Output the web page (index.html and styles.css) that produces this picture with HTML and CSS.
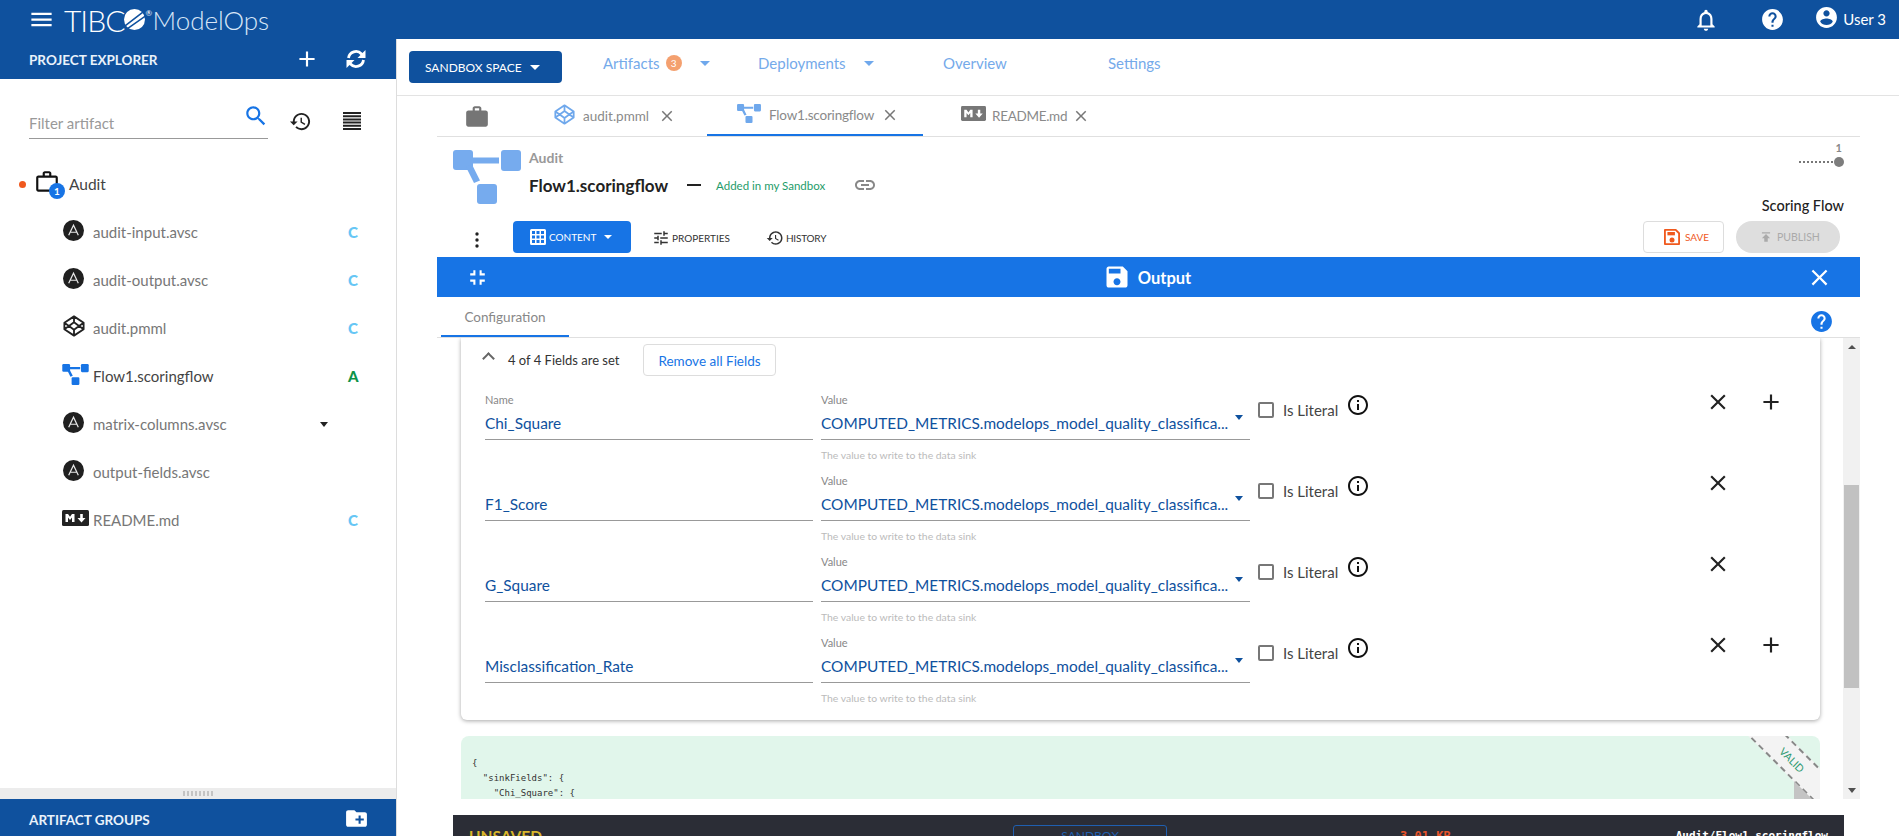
FILE: index.html
```html
<!DOCTYPE html>
<html lang="en">
<head>
<meta charset="utf-8">
<title>TIBCO ModelOps</title>
<link rel="stylesheet" href="styles.css">
</head>
<body>
<svg class="defs" aria-hidden="true">
<defs>
<symbol id="i-menu" viewBox="0 0 24 24"><path d="M3 18h18v-2H3v2zm0-5h18v-2H3v2zm0-7v2h18V6H3z"/></symbol>
<symbol id="i-add" viewBox="0 0 24 24"><path d="M19 13h-6v6h-2v-6H5v-2h6V5h2v6h6v2z"/></symbol>
<symbol id="i-close" viewBox="0 0 24 24"><path d="M19 6.41L17.59 5 12 10.59 6.41 5 5 6.41 10.59 12 5 17.59 6.41 19 12 13.41 17.59 19 19 17.59 13.41 12z"/></symbol>
<symbol id="i-search" viewBox="0 0 24 24"><path d="M15.5 14h-.79l-.28-.27C15.41 12.59 16 11.11 16 9.5 16 5.91 13.09 3 9.5 3S3 5.91 3 9.5 5.91 16 9.5 16c1.61 0 3.09-.59 4.23-1.57l.27.28v.79l5 4.99L20.49 19l-4.99-5zm-6 0C7.01 14 5 11.99 5 9.5S7.01 5 9.5 5 14 7.01 14 9.5 11.99 14 9.5 14z"/></symbol>
<symbol id="i-history" viewBox="0 0 24 24"><path d="M13 3c-4.97 0-9 4.03-9 9H1l3.89 3.89.07.14L9 12H6c0-3.87 3.13-7 7-7s7 3.13 7 7-3.13 7-7 7c-1.93 0-3.68-.79-4.94-2.06l-1.42 1.42C8.27 19.99 10.51 21 13 21c4.97 0 9-4.03 9-9s-4.03-9-9-9zm-1 5v5l4.28 2.54.72-1.21-3.5-2.08V8H12z"/></symbol>
<symbol id="i-bell" viewBox="0 0 24 24"><path d="M12 22c1.1 0 2-.9 2-2h-4c0 1.1.9 2 2 2zm6-6v-5c0-3.07-1.63-5.64-4.5-6.32V4c0-.83-.67-1.5-1.5-1.5s-1.5.67-1.5 1.5v.68C7.64 5.36 6 7.92 6 11v5l-2 2v1h16v-1l-2-2zm-2 1H8v-6c0-2.48 1.51-4.5 4-4.5s4 2.02 4 4.5v6z"/></symbol>
<symbol id="i-help" viewBox="0 0 24 24"><path d="M12 2C6.48 2 2 6.48 2 12s4.48 10 10 10 10-4.48 10-10S17.52 2 12 2zm1 17h-2v-2h2v2zm2.07-7.75l-.9.92C13.45 12.9 13 13.5 13 15h-2v-.5c0-1.1.45-2.1 1.17-2.83l1.24-1.26c.37-.36.59-.86.59-1.41 0-1.1-.9-2-2-2s-2 .9-2 2H8c0-2.21 1.79-4 4-4s4 1.79 4 4c0 .88-.36 1.68-.93 2.25z"/></symbol>
<symbol id="i-user" viewBox="0 0 24 24"><path d="M12 2C6.48 2 2 6.48 2 12s4.48 10 10 10 10-4.48 10-10S17.52 2 12 2zm0 3c1.66 0 3 1.34 3 3s-1.34 3-3 3-3-1.34-3-3 1.34-3 3-3zm0 14.2c-2.5 0-4.71-1.28-6-3.22.03-1.99 4-3.08 6-3.08 1.99 0 5.97 1.09 6 3.08-1.29 1.94-3.5 3.22-6 3.22z"/></symbol>
<symbol id="i-info" viewBox="0 0 24 24"><path d="M11 7h2v2h-2zm0 4h2v6h-2zm1-9C6.48 2 2 6.48 2 12s4.48 10 10 10 10-4.48 10-10S17.52 2 12 2zm0 18c-4.41 0-8-3.59-8-8s3.59-8 8-8 8 3.59 8 8-3.59 8-8 8z"/></symbol>
<symbol id="i-save" viewBox="0 0 24 24"><path d="M17 3H5c-1.11 0-2 .9-2 2v14c0 1.1.89 2 2 2h14c1.1 0 2-.9 2-2V7l-4-4zm-5 16c-1.66 0-3-1.34-3-3s1.34-3 3-3 3 1.34 3 3-1.34 3-3 3zm3-10H5V5h10v4z"/></symbol>
<symbol id="i-save-o" viewBox="0 0 24 24"><path d="M3.500 3.500h13l4 4v13h-17z" fill="none" stroke="currentColor" stroke-width="2.200" stroke-linejoin="round"/><path d="M6.500 6h9v4h-9z"/><circle cx="12" cy="15.500" r="3"/></symbol>
<symbol id="i-tune" viewBox="0 0 24 24"><path d="M3 17v2h6v-2H3zM3 5v2h10V5H3zm10 16v-2h8v-2h-8v-2h-2v6h2zM7 9v2H3v2h4v2h2V9H7zm14 4v-2H11v2h10zm-6-4h2V7h4V5h-4V3h-2v6z"/></symbol>
<symbol id="i-link" viewBox="0 0 24 24"><path d="M3.9 12c0-1.71 1.39-3.1 3.1-3.1h4V7H7c-2.76 0-5 2.24-5 5s2.24 5 5 5h4v-1.9H7c-1.71 0-3.1-1.39-3.1-3.1zM8 13h8v-2H8v2zm9-6h-4v1.9h4c1.71 0 3.1 1.39 3.1 3.1s-1.39 3.1-3.1 3.1h-4V17h4c2.76 0 5-2.24 5-5s-2.24-5-5-5z"/></symbol>
<symbol id="i-compress" viewBox="0 0 24 24"><path d="M5 16h3v3h2v-5H5v2zm3-8H5v2h5V5H8v3zm6 11h2v-3h3v-2h-5v5zm2-11V5h-2v5h5V8h-3z"/></symbol>
<symbol id="i-bag" viewBox="0 0 24 24"><path d="M20 6h-4V4c0-1.11-.89-2-2-2h-4c-1.11 0-2 .89-2 2v2H4c-1.11 0-1.99.89-1.99 2L2 19c0 1.11.89 2 2 2h16c1.11 0 2-.89 2-2V8c0-1.11-.89-2-2-2zm-6 0h-4V4h4v2z"/></symbol>
<symbol id="i-bag-o" viewBox="0 0 24 24"><path d="M14 6V4h-4v2h4zM4 8v11h16V8H4zm16-2c1.11 0 2 .89 2 2v11c0 1.11-.89 2-2 2H4c-1.11 0-2-.89-2-2l.01-11c0-1.11.88-2 1.99-2h4V4c0-1.11.89-2 2-2h4c1.11 0 2 .89 2 2v2h4z"/></symbol>
<symbol id="i-publish" viewBox="0 0 24 24"><path d="M5 4v2h14V4H5zm0 10h4v6h6v-6h4l-7-7-7 7z"/></symbol>
<symbol id="i-folder" viewBox="0 0 24 24"><path d="M20 6h-8l-2-2H4c-1.1 0-2 .9-2 2v12c0 1.1.9 2 2 2h16c1.1 0 2-.9 2-2V8c0-1.1-.9-2-2-2zm-1 8h-3v3h-2v-3h-3v-2h3V9h2v3h3v2z"/></symbol>
<symbol id="i-sync" viewBox="0 0 24 24"><path d="M4.500 11a7.500 7.500 0 0 1 13-4l2 2.200M19.500 13a7.500 7.500 0 0 1-13 4l-2-2.200" fill="none" stroke="currentColor" stroke-width="2.800"/><path d="M21.500 3v8h-8zM2.500 21v-8h8z"/></symbol>
<symbol id="i-lines" viewBox="0 0 18 18"><path d="M0 0h18v2H0zM0 3.200h18v2H0zM0 6.400h18v2H0zM0 9.600h18v2H0zM0 12.800h18v2H0zM0 16h18v2H0z"/></symbol>
<symbol id="i-dots" viewBox="0 0 6 18"><circle cx="3" cy="3" r="1.700"/><circle cx="3" cy="9" r="1.700"/><circle cx="3" cy="15" r="1.700"/></symbol>
<symbol id="i-grid" viewBox="0 0 16 16"><path d="M1.500 0h13A1.500 1.500 0 0 1 16 1.500v13a1.500 1.500 0 0 1-1.500 1.500h-13A1.500 1.500 0 0 1 0 14.500v-13A1.500 1.500 0 0 1 1.500 0zM2 2v3h3V2zm4.500 0v3h3V2zM11 2v3h3V2zM2 6.500v3h3v-3zm4.500 0v3h3v-3zm4.500 0v3h3v-3zM2 11v3h3v-3zm4.500 0v3h3v-3zm4.500 0v3h3v-3z" fill-rule="evenodd"/></symbol>
<symbol id="i-flow" viewBox="0 0 68 54"><rect x="0" y="0" width="20" height="20" rx="3"/><rect x="48" y="0" width="20" height="21" rx="3"/><rect x="24" y="34" width="20" height="20" rx="3"/><path d="M18 7.500h28v6H18zM13 17l6-2.500 8 16-6 2.500z"/></symbol>
<symbol id="i-cube" viewBox="0 0 24 24"><path d="M12 1.500 22.500 8.500v7L12 22.500 1.500 15.500v-7zM12 8 6.500 12 12 16l5.500-4zM12 1.500V8M12 16v6.500M1.500 8.500 6.500 12 1.500 15.500M22.500 8.500 17.500 12l5 3.500" fill="none" stroke="currentColor" stroke-width="2" stroke-linejoin="round"/></symbol>
<symbol id="i-ansible" viewBox="0 0 24 24"><circle cx="12" cy="12" r="12" fill="#202020"/><path d="M6.500 17.500 12 6l5.500 11.500M8 14h8" fill="none" stroke="#e8e8e8" stroke-width="1.400"/></symbol>
<symbol id="i-md" viewBox="0 0 27 16"><rect width="27" height="16" rx="1.500" fill="currentColor"/><path d="M3.500 12V4h2.500l2 2.800L10 4h2.500v8H10V7.500L8 10 6 7.500V12zM18.200 4h2.600v4h2.700l-4 4.500-4-4.500h2.700z" fill="#fff"/></symbol>
</defs>
</svg>

<header class="topbar">
  <svg class="ic menu-ic"><use href="#i-menu"/></svg>
  <div class="logo">
    <span class="logo-tibco">TIBC</span>
    <svg class="logo-ball" viewBox="0 0 20 20"><circle cx="10" cy="10" r="10" fill="#fff"/><path d="M1 16 18 3M3 19 20 7" stroke="#0f519e" stroke-width="1.500"/></svg>
    <span class="logo-reg">®</span>
    <span class="logo-name">ModelOps</span>
  </div>
  <div class="top-actions">
    <svg class="ic bell-ic"><use href="#i-bell"/></svg>
    <svg class="ic help-ic"><use href="#i-help"/></svg>
    <svg class="ic user-ic"><use href="#i-user"/></svg>
    <span class="user-name">User 3</span>
  </div>
</header>

<div class="main">
  <aside class="explorer">
    <div class="pe-head">
      <span class="pe-title">PROJECT EXPLORER</span>
      <svg class="ic pe-add"><use href="#i-add"/></svg>
      <svg class="ic pe-sync"><use href="#i-sync"/></svg>
    </div>
    <div class="filter-row">
      <div class="filter">
        <span class="filter-text">Filter artifact</span>
        <svg class="ic filter-search"><use href="#i-search"/></svg>
      </div>
      <svg class="ic filter-history"><use href="#i-history"/></svg>
      <svg class="ic filter-lines"><use href="#i-lines"/></svg>
    </div>
    <div class="tree">
      <div class="tree-root">
        <span class="root-dot"></span>
        <span class="root-icon"><svg class="ic root-bag"><use href="#i-bag-o"/></svg><span class="root-badge">1</span></span>
        <span class="root-name">Audit</span>
      </div>
      <div class="tree-row"><span class="tree-icon"><svg class="ic ansible"><use href="#i-ansible"/></svg></span><span class="tree-name">audit-input.avsc</span><span class="status status-c">C</span></div>
      <div class="tree-row"><span class="tree-icon"><svg class="ic ansible"><use href="#i-ansible"/></svg></span><span class="tree-name">audit-output.avsc</span><span class="status status-c">C</span></div>
      <div class="tree-row"><span class="tree-icon"><svg class="ic cube-dark"><use href="#i-cube"/></svg></span><span class="tree-name">audit.pmml</span><span class="status status-c">C</span></div>
      <div class="tree-row"><span class="tree-icon"><svg class="ic flow-small"><use href="#i-flow"/></svg></span><span class="tree-name tree-name-active">Flow1.scoringflow</span><span class="status status-a">A</span></div>
      <div class="tree-row"><span class="tree-icon"><svg class="ic ansible"><use href="#i-ansible"/></svg></span><span class="tree-name">matrix-columns.avsc</span><span class="tree-caret"></span></div>
      <div class="tree-row"><span class="tree-icon"><svg class="ic ansible"><use href="#i-ansible"/></svg></span><span class="tree-name">output-fields.avsc</span></div>
      <div class="tree-row"><span class="tree-icon"><svg class="ic md-dark"><use href="#i-md"/></svg></span><span class="tree-name">README.md</span><span class="status status-c">C</span></div>
    </div>
    <div class="splitter"><span class="splitter-grip"></span></div>
    <div class="groups">
      <span class="pe-title">ARTIFACT GROUPS</span>
      <svg class="ic groups-folder"><use href="#i-folder"/></svg>
    </div>
  </aside>

  <section class="workspace">
    <nav class="nav">
      <button class="space-btn">SANDBOX SPACE <span class="caret caret-white"></span></button>
      <div class="nav-links">
        <span class="nav-link nav-artifacts">Artifacts <span class="nav-badge">3</span><span class="caret caret-blue"></span></span>
        <span class="nav-link nav-deploy">Deployments <span class="caret caret-blue"></span></span>
        <span class="nav-link nav-overview">Overview</span>
        <span class="nav-link nav-settings">Settings</span>
      </div>
    </nav>
    <div class="doc">
      <div class="tabs">
        <div class="tab tab-bag"><svg class="ic tab-bag-ic"><use href="#i-bag"/></svg></div>
        <div class="tab tab-pmml"><svg class="ic tab-cube"><use href="#i-cube"/></svg><span class="tab-name">audit.pmml</span><svg class="ic tab-x"><use href="#i-close"/></svg></div>
        <div class="tab tab-flow"><svg class="ic tab-flow-ic"><use href="#i-flow"/></svg><span class="tab-name">Flow1.scoringflow</span><svg class="ic tab-x"><use href="#i-close"/></svg></div>
        <div class="tab tab-md"><svg class="ic tab-md-ic"><use href="#i-md"/></svg><span class="tab-name">README.md</span><svg class="ic tab-x"><use href="#i-close"/></svg></div>
      </div>
      <div class="head">
        <svg class="ic head-flow"><use href="#i-flow"/></svg>
        <div class="head-titles">
          <div class="head-project">Audit</div>
          <div class="head-main">
            <span class="head-file">Flow1.scoringflow</span>
            <span class="head-dash"></span>
            <span class="head-added">Added in my Sandbox</span>
            <svg class="ic head-link"><use href="#i-link"/></svg>
          </div>
        </div>
        <div class="head-right">
          <div class="version-num">1</div>
          <div class="version-line"><span class="version-dots"></span><span class="version-dot"></span></div>
          <div class="head-type">Scoring Flow</div>
        </div>
      </div>
      <div class="toolbar">
        <svg class="ic tool-dots"><use href="#i-dots"/></svg>
        <button class="tool-content"><svg class="ic grid-ic"><use href="#i-grid"/></svg>CONTENT<span class="caret caret-white caret-sm"></span></button>
        <span class="tool-link tool-props"><svg class="ic tool-ic"><use href="#i-tune"/></svg>PROPERTIES</span>
        <span class="tool-link tool-hist"><svg class="ic tool-ic"><use href="#i-history"/></svg>HISTORY</span>
        <button class="tool-save"><svg class="ic save-ic"><use href="#i-save-o"/></svg>SAVE</button>
        <button class="tool-publish"><svg class="ic publish-ic"><use href="#i-publish"/></svg>PUBLISH</button>
      </div>
      <div class="bluebar">
        <svg class="ic bar-compress"><use href="#i-compress"/></svg>
        <div class="bar-title"><svg class="ic bar-save"><use href="#i-save"/></svg>Output</div>
        <svg class="ic bar-close"><use href="#i-close"/></svg>
      </div>
      <div class="subtabs">
        <span class="subtab">Configuration</span>
        <svg class="ic sub-help"><use href="#i-help"/></svg>
      </div>
      <div class="scroll">
        <div class="scroll-content">
          <div class="card">
            <div class="card-top">
              <span class="chevron"></span>
              <span class="fields-count">4 of 4 Fields are set</span>
              <button class="remove-btn">Remove all Fields</button>
            </div>
            <div class="field">
              <div class="cell-name"><div class="label">Name</div><div class="input">Chi_Square</div></div>
              <div class="cell-value"><div class="label">Value</div><div class="input input-select">COMPUTED_METRICS.modelops_model_quality_classifica...<span class="select-caret"></span></div><div class="helper">The value to write to the data sink</div></div>
              <label class="literal"><span class="checkbox"></span>Is Literal</label>
              <svg class="ic info-ic"><use href="#i-info"/></svg>
              <svg class="ic row-x"><use href="#i-close"/></svg>
              <svg class="ic row-plus"><use href="#i-add"/></svg>
            </div>
            <div class="field">
              <div class="cell-name"><div class="label"></div><div class="input">F1_Score</div></div>
              <div class="cell-value"><div class="label">Value</div><div class="input input-select">COMPUTED_METRICS.modelops_model_quality_classifica...<span class="select-caret"></span></div><div class="helper">The value to write to the data sink</div></div>
              <label class="literal"><span class="checkbox"></span>Is Literal</label>
              <svg class="ic info-ic"><use href="#i-info"/></svg>
              <svg class="ic row-x"><use href="#i-close"/></svg>
            </div>
            <div class="field">
              <div class="cell-name"><div class="label"></div><div class="input">G_Square</div></div>
              <div class="cell-value"><div class="label">Value</div><div class="input input-select">COMPUTED_METRICS.modelops_model_quality_classifica...<span class="select-caret"></span></div><div class="helper">The value to write to the data sink</div></div>
              <label class="literal"><span class="checkbox"></span>Is Literal</label>
              <svg class="ic info-ic"><use href="#i-info"/></svg>
              <svg class="ic row-x"><use href="#i-close"/></svg>
            </div>
            <div class="field">
              <div class="cell-name"><div class="label"></div><div class="input">Misclassification_Rate</div></div>
              <div class="cell-value"><div class="label">Value</div><div class="input input-select">COMPUTED_METRICS.modelops_model_quality_classifica...<span class="select-caret"></span></div><div class="helper">The value to write to the data sink</div></div>
              <label class="literal"><span class="checkbox"></span>Is Literal</label>
              <svg class="ic info-ic"><use href="#i-info"/></svg>
              <svg class="ic row-x"><use href="#i-close"/></svg>
              <svg class="ic row-plus"><use href="#i-add"/></svg>
            </div>
          </div>
          <div class="json">
<pre class="json-code">{
  "sinkFields": {
    "Chi_Square": {</pre>
            <div class="ribbon"><span class="ribbon-text">VALID</span></div>
            <span class="ribbon-fold"></span>
          </div>
        </div>
        <div class="scrollbar">
          <span class="sb-up"></span>
          <span class="sb-track"><span class="sb-thumb"></span></span>
          <span class="sb-down"></span>
        </div>
      </div>
      <footer class="statusbar">
        <span class="sb-unsaved">UNSAVED</span>
        <span class="sb-sandbox">SANDBOX</span>
        <span class="sb-size">3.01 KB</span>
        <span class="sb-path">Audit/Flow1.scoringflow</span>
      </footer>
    </div>
  </section>
</div>
</body>
</html>
```
FILE: styles.css
```css
* { box-sizing: border-box; }
html, body { margin: 0; height: 836px; overflow: hidden; }
body {
  display: flex;
  flex-direction: column;
  font-family: "Lato", "Noto Sans", sans-serif;
  color: #333;
  background: #fff;
}
button { font-family: inherit; cursor: pointer; }
.defs { width: 0; height: 0; position: absolute; }
.ic { display: block; flex: none; fill: currentColor; }

/* top bar */
.topbar {
  flex: none; height: 39px; background: #0f519e; color: #fff;
  display: flex; align-items: center; padding-left: 28px;
}
.menu-ic { width: 27px; height: 27px; }
.logo { display: flex; align-items: center; margin-left: 9px; height: 39px; }
.logo-tibco { font-size: 30px; font-weight: 300; letter-spacing: -1px; }
.logo-ball { width: 21px; height: 21px; margin-left: 0; }
.logo-reg { font-size: 8px; margin: -14px 0 0 0; width: 7px; }
.logo-name { font-size: 26px; font-weight: 300; color: #d7e6f7; }
.top-actions { margin-left: auto; display: flex; align-items: center; padding-right: 13px; }
.bell-ic { width: 26px; height: 26px; margin-right: 1px; }
.help-ic { width: 25px; height: 25px; margin-left: 40px; }
.user-ic { width: 25px; height: 25px; margin: -4px 0 0 29px; }
.user-name { font-size: 15px; margin: -2px 0 0 4px; }

.main { flex: 1; display: flex; min-height: 0; }

/* explorer */
.explorer { flex: none; width: 397px; border-right: 1px solid #ddd; display: flex; flex-direction: column; }
.pe-head {
  flex: none; height: 40px; background: #0f519e; color: #fff;
  display: flex; align-items: center; padding-left: 29px;
}
.pe-title { font-size: 13.5px; font-weight: 700; color: #eaf2fb; }
.pe-head .pe-title { margin-top: 2px; width: 133px; white-space: nowrap; }
.pe-add { width: 26px; height: 26px; margin-left: 132px; }
.pe-sync { width: 24px; height: 24px; margin-left: 24px; }
.filter-row { flex: none; display: flex; padding: 19px 0 0 29px; height: 80px; }
.filter {
  width: 239px; height: 41px; border-bottom: 1px solid #999;
  display: flex; justify-content: space-between; padding-top: 12px;
}
.filter-text { font-size: 15px; color: #999; line-height: 24px; padding-top: 1px; }
.filter-search { width: 26px; height: 26px; color: #1774e5; margin: -7px -1px 0 0; }
.filter-history { width: 23px; height: 23px; margin: 12px 0 0 21px; color: #222; }
.filter-lines { width: 18px; height: 18px; margin: 14px 0 0 31px; color: #222; }
.tree { flex: 1; display: flex; flex-direction: column; padding-top: 5px; }
.tree-root { display: flex; align-items: center; height: 40px; padding-left: 19px; margin-bottom: 4px; }
.root-dot { width: 7px; height: 7px; border-radius: 50%; background: #f0591e; }
.root-icon { position: relative; width: 26px; margin-left: 8px; }
.root-bag { width: 26px; height: 26px; color: #111; margin-top: -4px; }
.root-badge {
  position: absolute; left: 15px; top: 10px; width: 16px; height: 16px; border-radius: 50%;
  background: #1774e5; color: #fff; font-size: 10px; font-weight: 700; text-align: center; line-height: 16px;
}
.root-name { font-size: 15.5px; margin-left: 9px; color: #444; }
.tree-row { display: flex; align-items: center; height: 48px; padding-left: 60px; position: relative; }
.tree-icon { width: 33px; display: flex; justify-content: center; padding-right: 6px; margin-top: -4px; }
.ansible { width: 21px; height: 21px; }
.cube-dark { width: 22px; height: 22px; color: #222; }
.flow-small { width: 27px; height: 21px; color: #1774e5; margin-left: 3px; }
.md-dark { width: 27px; height: 16px; color: #222; margin-left: 3px; }
.tree-name { font-size: 15px; color: #777; }
.tree-name-active { color: #444; }
.status { position: absolute; left: 348px; font-size: 15px; font-weight: 900; }
.status-c { color: #66c6f5; }
.status-a { color: #0d9348; }
.tree-caret {
  position: absolute; left: 320px; width: 0; height: 0;
  border: 4px solid transparent; border-top: 5px solid #222; border-bottom: 0;
}
.splitter { flex: none; height: 11px; background: #ececec; display: flex; justify-content: center; align-items: center; padding-right: 1px; }
.splitter-grip {
  width: 30px; height: 5px;
  background: repeating-linear-gradient(90deg, #c4c4c4 0 2px, transparent 2px 4px);
}
.groups { flex: none; height: 37px; background: #0f519e; color: #fff; display: flex; align-items: center; padding-left: 29px; }
.groups .pe-title { margin-top: 4px; width: 120px; white-space: nowrap; }
.groups-folder { width: 25px; height: 25px; margin: 2px 0 0 195px; }

/* nav */
.workspace { flex: 1; min-width: 0; display: flex; flex-direction: column; }
.nav { flex: none; height: 57px; border-bottom: 1px solid #e3e3e3; display: flex; align-items: flex-start; padding: 12px 0 0 12px; }
.space-btn {
  width: 153px; height: 32px; background: #0f519e; color: #fff; border: 0; border-radius: 4px;
  font-size: 12px; display: flex; align-items: center; justify-content: flex-start; gap: 8px; padding: 0 0 0 16px;
}
.caret { display: inline-block; width: 0; height: 0; border-style: solid; border-color: transparent; border-width: 5px 5px 0; }
.caret-white { border-top-color: #fff; }
.caret-blue { border-top-color: #6fa8ec; }
.caret-sm { border-width: 4px 4px 0; margin-left: 8px; }
.nav-links { display: flex; margin: -4px 0 0 41px; height: 32px; align-items: center; }
.nav-link { font-size: 15px; color: #75aaea; display: flex; align-items: center; }
.nav-artifacts { width: 155px; }
.nav-badge {
  width: 16px; height: 16px; border-radius: 50%; background: #f4a06f; color: #fff; font-size: 10px;
  text-align: center; line-height: 16px; margin-left: 6px; margin-right: 18px;
}
.nav-deploy { width: 185px; }
.nav-deploy .caret { margin-left: 18px; }
.nav-overview { width: 165px; }

/* doc */
.doc { flex: 1; min-height: 0; margin: 0 39px 0 40px; display: flex; flex-direction: column; }
.tabs { flex: none; height: 41px; border-bottom: 1px solid #e0e0e0; display: flex; }
.tab { display: flex; align-items: center; height: 40px; }
.tab-bag { width: 117px; padding-left: 27px; }
.tab-bag-ic { width: 26px; height: 26px; color: #757575; margin-top: 2px; }
.tab-pmml { width: 153px; }
.tab-pmml .tab-x { margin-left: 9px; }
.tab-cube { width: 21px; height: 21px; color: #6fa8ec; margin-top: -3px; }
.tab-name { font-size: 13.5px; color: #8a8a8a; margin-left: 8px; }
.tab-x { width: 18px; height: 18px; color: #777; margin-left: 7px; }
.tab-flow { width: 216px; padding-left: 30px; border-bottom: 2px solid #1774e5; }
.tab-flow .tab-name { letter-spacing: -.2px; }
.tab-flow-ic { width: 24px; height: 19px; color: #6fa8ec; margin-top: -4px; }
.tab-md { padding-left: 38px; }
.tab-md-ic { width: 25px; height: 15px; color: #777; margin-top: -5px; }
.tab-md .tab-name { margin-left: 6px; letter-spacing: -.3px; }
.tab-md .tab-x { margin-left: 5px; }

.head { flex: none; height: 84px; display: flex; padding: 13px 16px 0 16px; }
.head-flow { width: 68px; height: 54px; color: #76abee; }
.head-titles { margin-left: 8px; }
.head-project { font-size: 14px; font-weight: 700; color: #999; line-height: 16px; }
.head-main { display: flex; align-items: center; margin-top: 8px; height: 22px; }
.head-file { font-size: 17px; font-weight: 700; color: #222; }
.head-dash { width: 14px; height: 2px; background: #222; margin-left: 19px; }
.head-added { font-size: 11.5px; color: #1e9c6a; margin-left: 15px; }
.head-link { width: 24px; height: 24px; color: #888; margin-left: 28px; }
.head-right { margin-left: auto; text-align: right; }
.version-num { font-size: 11px; font-weight: 700; color: #888; line-height: 14px; margin-top: -9px; padding-right: 2px; }
.version-line { display: flex; align-items: center; justify-content: flex-end; height: 10px; margin-top: 2px; }
.version-dots { width: 34px; height: 2px; background: repeating-linear-gradient(90deg, #777 0 2px, transparent 2px 4px); }
.version-dot { width: 10px; height: 10px; border-radius: 50%; background: #7d7d7d; margin-left: 1px; }
.head-type { font-size: 14.5px; color: #222; font-weight: 500; margin-top: 29px; line-height: 20px; }

.toolbar { flex: none; height: 32px; display: flex; align-items: center; padding-left: 37px; }
.tool-dots { width: 6px; height: 18px; color: #222; margin-top: 6px; }
.tool-content {
  width: 118px; height: 32px; background: #1774e5; color: #fff; border: 0; border-radius: 4px;
  font-size: 10px; display: flex; align-items: center; padding: 0 0 0 17px; margin-left: 33px;
}
.grid-ic { width: 16px; height: 16px; margin-right: 3px; }
.tool-link { font-size: 10px; color: #333; display: flex; align-items: center; padding-top: 1px; }
.tool-ic { width: 18px; height: 18px; margin-right: 2px; }
.tool-props { margin-left: 21px; }
.tool-hist { margin-left: 36px; letter-spacing: -.2px; }
.tool-save {
  width: 81px; height: 32px; margin-left: auto; background: #fff; border: 1px solid #ddd; border-radius: 4px;
  color: #f0591e; font-size: 10px; display: flex; align-items: center; padding: 0 0 0 18px;
}
.save-ic { width: 20px; height: 20px; margin-right: 3px; }
.tool-publish {
  width: 104px; height: 32px; margin: 0 20px 0 12px; background: #dedede; border: 0; border-radius: 16px;
  color: #aaa; font-size: 10.5px; display: flex; align-items: center; padding: 0 0 0 23px;
}
.publish-ic { width: 14px; height: 14px; margin-right: 4px; color: #aaa; }

.bluebar {
  flex: none; height: 40px; margin-top: 4px; background: #1774e5; color: #fff;
  display: flex; align-items: center; justify-content: space-between; padding: 0 27px 0 28px;
}
.bar-compress { width: 25px; height: 25px; }
.bar-title { display: flex; align-items: center; font-size: 16.500px; font-weight: 700; gap: 7px; margin-right: 2px; padding-top: 1px; }
.bar-save { width: 28px; height: 28px; margin-top: -2px; }
.bar-close { width: 27px; height: 27px; }
.subtabs {
  flex: none; height: 41px; border-bottom: 1px solid #e0e0e0; display: flex; justify-content: space-between; align-items: flex-start;
  padding: 0 26px 0 4px;
}
.subtab {
  display: block; width: 128px; height: 40px; text-align: center; line-height: 40px; font-size: 13.5px; color: #888;
  border-bottom: 2px solid #1774e5;
}
.sub-help { width: 25px; height: 25px; color: #1774e5; margin-top: 12px; }

.scroll { flex: none; height: 461px; display: flex; }
.scroll-content { flex: 1; min-width: 0; overflow: hidden; padding: 0 23px 0 24px; }
.card {
  height: 382px; background: #fff; border-radius: 0 0 6px 6px; padding: 0 0 0 24px;
  box-shadow: 0 1px 4px rgba(0,0,0,.35);
}
.card-top { height: 54px; display: flex; align-items: flex-start; padding-top: 6px; }
.chevron {
  width: 9px; height: 9px; border-left: 2px solid #666; border-top: 2px solid #666;
  transform: rotate(45deg); margin: 10px 0 0 -1px;
}
.fields-count { font-size: 13px; color: #333; line-height: 32px; margin: 0 0 0 15px; width: 135px; white-space: nowrap; }
.remove-btn {
  width: 133px; height: 32px; background: #fff; border: 1px solid #ddd; border-radius: 4px;
  color: #1774e5; font-size: 13.5px; padding: 2px 0 0;
}
.field {
  height: 81px; display: grid;
  grid-template-columns: 328px 429px 90px 20px 293px 66px 24px;
  column-gap: 8px; align-items: start;
}
.label { height: 16px; font-size: 11px; line-height: 16px; color: #888; }
.input {
  height: 32px; border-bottom: 1px solid #999; font-size: 15.4px; line-height: 20px; padding-top: 5px; color: #0f519e;
  white-space: nowrap;
}
.input-select { position: relative; }
.select-caret {
  position: absolute; right: 7px; top: 7px; width: 0; height: 0;
  border: 4px solid transparent; border-top: 5px solid #0f519e; border-bottom: 0;
}
.helper { font-size: 10.4px; color: #bbb; line-height: 14px; margin-top: 8px; }
.literal { display: flex; align-items: center; font-size: 15px; color: #444; margin-top: 10px; height: 16px; }
.checkbox { width: 16px; height: 16px; border: 2px solid #777; border-radius: 2px; margin-right: 9px; }
.info-ic { width: 24px; height: 24px; color: #111; margin: 1px 0 0 -10px; }
.row-x { width: 26px; height: 26px; color: #222; margin: -3px 0 0 0; grid-column: 6; justify-self: center; }
.row-plus { width: 26px; height: 26px; color: #222; margin: -3px 0 0 -1px; grid-column: 7; justify-self: center; }

.json {
  position: relative; height: 90px; margin-top: 16px; background: #e1f6eb; border-radius: 8px 8px 0 0; overflow: hidden;
}
.json-code {
  margin: 0; padding: 20px 0 0 11px; font-family: "DejaVu Sans Mono", monospace; font-size: 9px; line-height: 15px; color: #333;
}
.ribbon {
  position: absolute; left: 1266px; top: 10px; width: 130px; height: 28px; background: #f3f3f3;
  border-top: 2px dashed #888; border-bottom: 2px dashed #888;
  transform: rotate(45deg);
  text-align: center;
}
.ribbon-text { font-size: 10.5px; color: #2f9a72; line-height: 24px; display: block; }
.ribbon-fold { position: absolute; left: 1333px; top: 45px; width: 0; height: 0; border-style: solid; border-width: 18px 0 0 18px; border-color: transparent transparent transparent #c4c4c4; }

.scrollbar { flex: none; width: 17px; background: #f1f1f1; display: flex; flex-direction: column; align-items: center; }
.sb-up, .sb-down { flex: none; height: 17px; display: flex; align-items: center; justify-content: center; }
.sb-up::before { content: ""; border: 4px solid transparent; border-bottom: 4px solid #505050; border-top: 0; }
.sb-down::before { content: ""; border: 4px solid transparent; border-top: 5px solid #505050; border-bottom: 0; }
.sb-track { flex: 1; width: 100%; padding: 130px 1px 0; }
.sb-thumb { display: block; height: 203px; background: #c1c1c1; margin: 0 0; }

.statusbar {
  flex: none; height: 21px; margin: 16px 16px 0; background: #2b2d36; position: relative; overflow: hidden;
  display: flex; padding: 15px 16px 0; align-items: flex-start; line-height: 12px;
}
.sb-unsaved { font-size: 15.500px; font-weight: 700; color: #d9b62a; width: 545px; }
.sb-sandbox {
  width: 154px; height: 20px; margin-top: -5px; border: 1px solid #1f5fb0; border-radius: 3px 3px 0 0; color: #1f5fb0;
  font-size: 12px; text-align: center; line-height: 20px;
}
.sb-size { font-family: "DejaVu Sans Mono", monospace; font-size: 12px; font-weight: 700; color: #e8542a; margin-left: 233px; width: 276px; }
.sb-path { font-family: "DejaVu Sans Mono", monospace; font-size: 11px; font-weight: 700; color: #fff; white-space: nowrap; }
```
